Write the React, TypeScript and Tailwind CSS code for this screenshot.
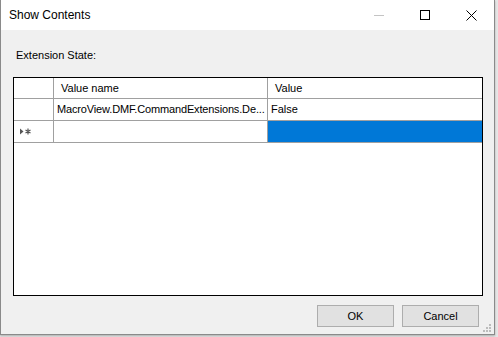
export default function App() {
  const font = { fontFamily: '"Liberation Sans", Arial, sans-serif' };

  return (
    <div className="w-[498px] h-[337px] bg-[#e6e6e6] overflow-hidden" style={font}>
      <div className="w-[495px] h-[335px] flex flex-col border-l border-r border-b border-[#8a8a8a] bg-[#f0f0f0] shadow-[0_1px_2px_rgba(0,0,0,0.25)]">
        {/* Title bar */}
        <div className="h-[30px] bg-white flex items-center shrink-0">
          <span className="pl-[8px] text-[12px] text-black flex-1">Show Contents</span>
          <div className="flex h-full">
            <div className="w-[46px] h-full flex items-center justify-center">
              <div className="w-[10px] h-px bg-[#c4c4c4]" />
            </div>
            <div className="w-[46px] h-full flex items-center justify-center">
              <div className="w-[10px] h-[10px] border border-black" />
            </div>
            <div className="w-[46px] h-full flex items-center justify-center">
              <svg width="11" height="11" viewBox="0 0 11 11">
                <path d="M0.5 0.5 L10.5 10.5 M10.5 0.5 L0.5 10.5" stroke="#000" strokeWidth="1" />
              </svg>
            </div>
          </div>
        </div>

        {/* Body */}
        <div className="flex-1 flex flex-col pl-[12px] pr-[15px]">
          <div className="mt-[19px] ml-[3px] h-[13px] leading-[13px] text-[11px] text-black">Extension State:</div>

          <div className="mt-[15px] w-[470px] h-[219px] border border-black bg-white flex flex-col text-[11px] text-black">
            {/* Header row */}
            <div className="flex h-[21px] border-b border-[#a0a0a0]">
              <div className="w-[40px] border-r border-[#a0a0a0]" />
              <div className="w-[214px] border-r border-[#a0a0a0] flex items-center pl-[7px]">Value name</div>
              <div className="flex-1 flex items-center pl-[7px]">Value</div>
            </div>
            {/* Data row */}
            <div className="flex h-[22px] border-b border-[#a0a0a0]">
              <div className="w-[40px] border-r border-[#a0a0a0]" />
              <div className="w-[214px] border-r border-[#a0a0a0] flex items-center pl-[3px] whitespace-nowrap tracking-[-0.15px]">
                MacroView.DMF.CommandExtensions.De...
              </div>
              <div className="flex-1 flex items-center pl-[3px]">False</div>
            </div>
            {/* New row */}
            <div className="flex h-[22px] border-b border-[#a0a0a0]">
              <div className="w-[40px] border-r border-[#a0a0a0] flex items-center pl-[6px]">
                <svg width="12" height="7" viewBox="0 0 12 7">
                  <path d="M0 0.5 L3.5 3.5 L0 6.5 Z" fill="#555" />
                  <path d="M8 0.5 V6.5 M5.5 2 L10.5 5 M10.5 2 L5.5 5" stroke="#555" strokeWidth="1.2" />
                </svg>
              </div>
              <div className="w-[214px] border-r border-[#a0a0a0]" />
              <div className="flex-1 bg-[#0078d7]" />
            </div>
          </div>

          <div className="mt-[9px] flex justify-end gap-[8px]">
            <button className="w-[77px] h-[22px] bg-[#e1e1e1] border border-[#adadad] text-[11px] text-black">OK</button>
            <button className="w-[77px] h-[22px] bg-[#e1e1e1] border border-[#adadad] text-[11px] text-black">Cancel</button>
          </div>

          {/* Resize grip */}
          <div className="flex justify-end -mr-[13px] mt-[-4px]">
            <svg width="10" height="10" viewBox="0 0 10 10">
              <rect x="7" y="1" width="2" height="2" fill="#bcbcbc" />
              <rect x="4" y="4" width="2" height="2" fill="#bcbcbc" />
              <rect x="7" y="4" width="2" height="2" fill="#bcbcbc" />
              <rect x="1" y="7" width="2" height="2" fill="#bcbcbc" />
              <rect x="4" y="7" width="2" height="2" fill="#bcbcbc" />
              <rect x="7" y="7" width="2" height="2" fill="#bcbcbc" />
            </svg>
          </div>
        </div>
      </div>
    </div>
  );
}
